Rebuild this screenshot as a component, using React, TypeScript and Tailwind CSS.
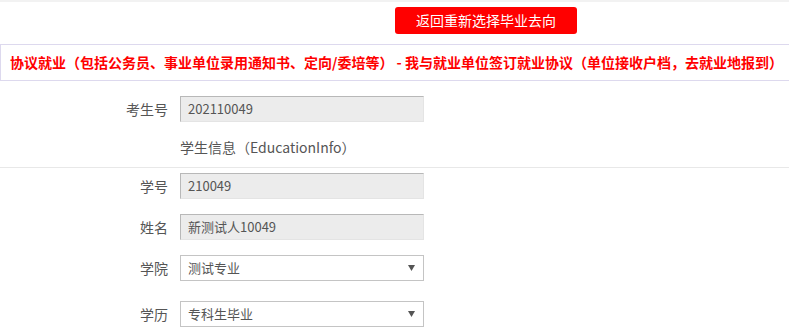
import React from "react";

const font = { fontFamily: '"Noto Sans CJK SC", "Noto Sans", sans-serif' };

function Row({ label, children, className = "" }: { label: string; children: React.ReactNode; className?: string }) {
  return (
    <div className={`flex items-center ${className}`}>
      <div className="w-[168px] text-right text-[14px] text-[#555]">{label}</div>
      <div className="ml-[12px]">{children}</div>
    </div>
  );
}

function ReadInput({ value }: { value: string }) {
  return (
    <div className="w-[244px] h-[26px] bg-[#ececec] border-t border-l border-[#b8b8b8] border-b border-r border-b-[#e4e4e4] border-r-[#e4e4e4] flex items-center pl-[7px] text-[13px] text-[#555]">
      {value}
    </div>
  );
}

function Select({ value }: { value: string }) {
  return (
    <div className="w-[244px] h-[26px] bg-white border border-[#c4c4c4] flex items-center justify-between pl-[7px] pr-[8px] text-[13px] text-[#555]">
      <span>{value}</span>
      <svg width="7" height="6" viewBox="0 0 7 6"><path d="M0 0 H7 L3.5 6 Z" fill="#555" /></svg>
    </div>
  );
}

export default function App() {
  return (
    <div className="w-[789px] h-[328px] bg-white overflow-hidden" style={font}>
      <div className="h-[2px] bg-[#f2f2f2]" />
      <div className="mt-[5px] ml-[395px] w-[182px] h-[27px] bg-[#ff0000] rounded-[3px] flex items-center justify-center text-white text-[14px]">
        返回重新选择毕业去向
      </div>
      <div className="mt-[10px] w-[800px] h-[37px] border border-[#ddd9ee] flex items-center pl-[9px] text-[14px] font-bold text-[#ff0000] whitespace-nowrap">
        协议就业（包括公务员、事业单位录用通知书、定向/委培等） - 我与就业单位签订就业协议（单位接收户档，去就业地报到）
      </div>
      <Row label="考生号" className="mt-[15px]">
        <ReadInput value="202110049" />
      </Row>
      <div className="ml-[180px] mt-[13px] h-[24px] flex items-center text-[14px] text-[#555]">学生信息（EducationInfo）</div>
      <div className="mt-[8px] h-px bg-[#e8e8e8]" />
      <Row label="学号" className="mt-[5px]">
        <ReadInput value="210049" />
      </Row>
      <Row label="姓名" className="mt-[15px]">
        <ReadInput value="新测试人10049" />
      </Row>
      <Row label="学院" className="mt-[15px]">
        <Select value="测试专业" />
      </Row>
      <Row label="学历" className="mt-[20px]">
        <Select value="专科生毕业" />
      </Row>
    </div>
  );
}
